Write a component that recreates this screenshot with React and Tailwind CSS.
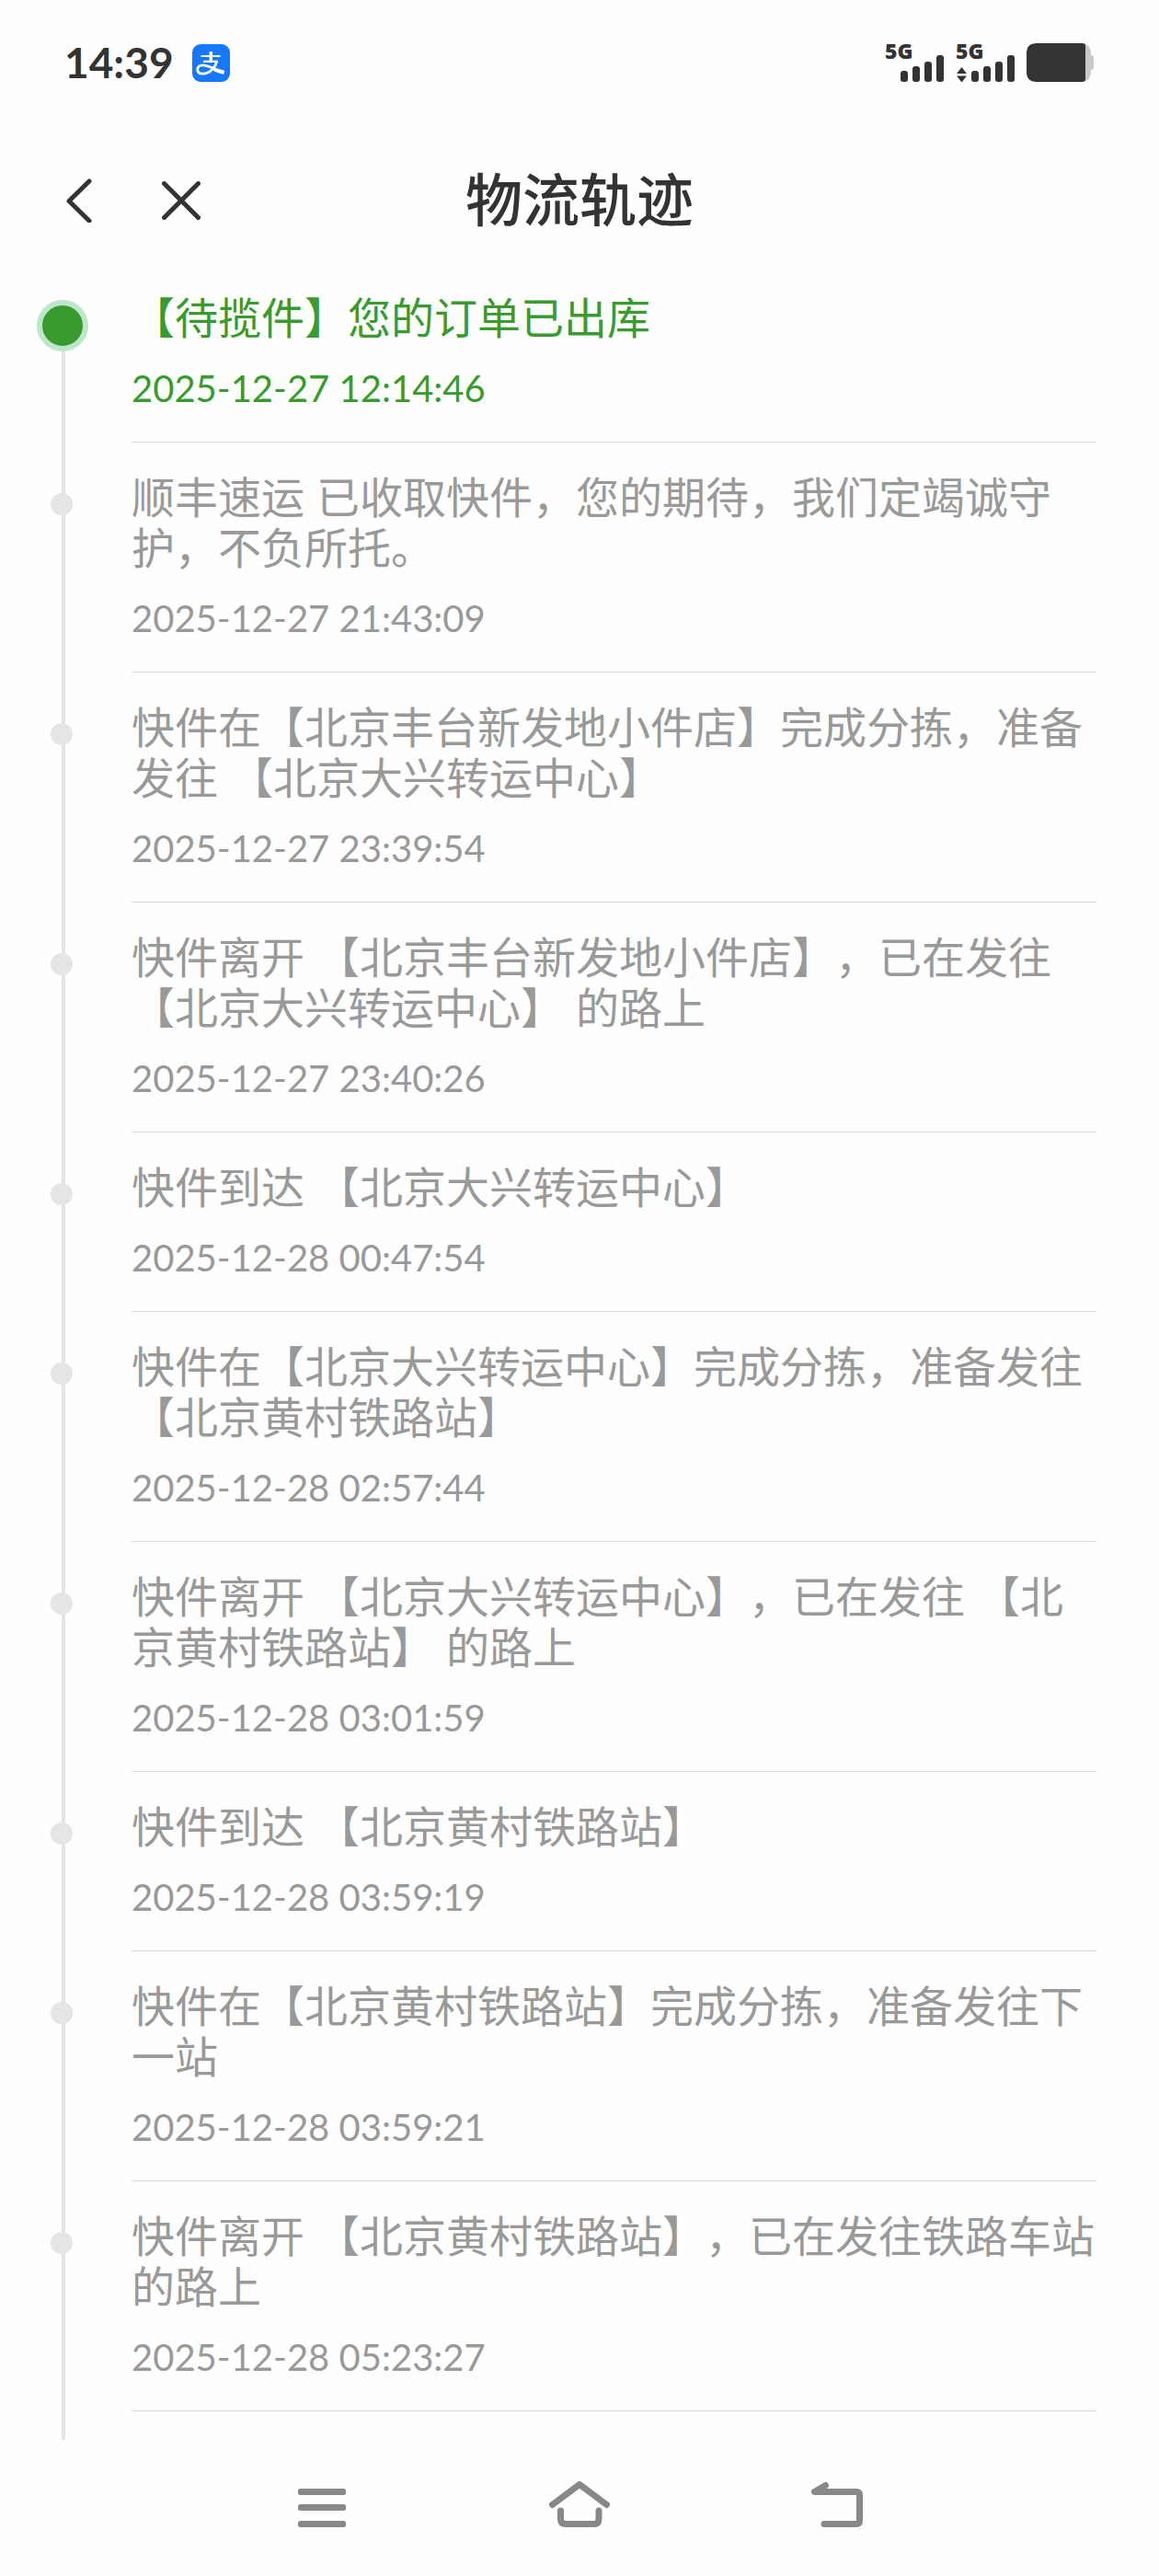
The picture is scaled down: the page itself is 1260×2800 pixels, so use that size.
import React from "react";

const events = [
  { text: "【待揽件】您的订单已出库", time: "2025-12-27 12:14:46", active: true },
  { text: "顺丰速运 已收取快件，您的期待，我们定竭诚守护，不负所托。", time: "2025-12-27 21:43:09" },
  { text: "快件在【北京丰台新发地小件店】完成分拣，准备发往 【北京大兴转运中心】", time: "2025-12-27 23:39:54" },
  { text: "快件离开 【北京丰台新发地小件店】，已在发往 【北京大兴转运中心】 的路上", time: "2025-12-27 23:40:26" },
  { text: "快件到达 【北京大兴转运中心】", time: "2025-12-28 00:47:54" },
  { text: "快件在【北京大兴转运中心】完成分拣，准备发往 【北京黄村铁路站】", time: "2025-12-28 02:57:44" },
  { text: "快件离开 【北京大兴转运中心】，已在发往 【北京黄村铁路站】 的路上", time: "2025-12-28 03:01:59" },
  { text: "快件到达 【北京黄村铁路站】", time: "2025-12-28 03:59:19" },
  { text: "快件在【北京黄村铁路站】完成分拣，准备发往下一站", time: "2025-12-28 03:59:21" },
  { text: "快件离开 【北京黄村铁路站】，已在发往铁路车站的路上", time: "2025-12-28 05:23:27" },
];

function Signal({ data }) {
  return (
    <div className="relative w-16 h-[42px]">
      <span className="absolute left-0 -top-1 text-[23px] leading-6 font-extrabold font-['Open_Sans',sans-serif]">5G</span>
      <svg className="w-16 h-[42px]" viewBox="0 0 64 42" fill="currentColor" aria-hidden="true">
        {data && <path d="M6.500 26 12 33H1zM1 35.500h11L6.500 42.500z" />}
        <rect x="17" y="30" width="8" height="12" rx="3" />
        <rect x="30" y="25" width="8" height="17" rx="3" />
        <rect x="43" y="20" width="8" height="22" rx="3" />
        <rect x="56" y="13" width="8" height="29" rx="3" />
      </svg>
    </div>
  );
}

function StatusBar() {
  return (
    <div className="flex items-center justify-between h-[136px] px-[70px]">
      <div className="flex items-center gap-5">
        <span className="text-[46px] leading-[56px] font-bold font-['Lato',sans-serif]">14:39</span>
        <svg className="w-[41px] h-[41px]" viewBox="0 0 41 41" role="img" aria-label="支付宝">
          <rect width="41" height="41" rx="9" fill="#1677ff" />
          <g fill="none" stroke="#fff">
            <path d="M9.500 13h21M12 18.800h16" strokeWidth="2.200" />
            <path d="M20.300 8v11" strokeWidth="3.400" />
            <path
              d="M26.800 18.800C25 25 19.500 32.200 11.500 32.200c-4 0-5.800-2-5.800-4.600 0-2.800 2.500-4.800 6-4.800 6 0 12 5 23 7.500"
              strokeWidth="2.800"
            />
            <path d="M24 27.500c3 1.300 6 2.300 10.500 3.300" strokeWidth="4" />
          </g>
        </svg>
      </div>
      <div className="flex items-center gap-[13px]">
        <Signal />
        <Signal data />
        <svg className="w-[74px] h-[42px]" viewBox="0 0 74 42" role="img" aria-label="电量">
          <path
            d="M60 0q10 1 10 11v2q3 0 3 3v10q0 3-3 3v2q0 10-10 11z"
            fill="#c9c9c9"
          />
          <path d="M11 0h50q3 0 3 3v36q0 3-3 3H11Q0 42 0 31V11Q0 0 11 0z" fill="#333" />
        </svg>
      </div>
    </div>
  );
}

function Header() {
  return (
    <header className="grid grid-cols-3 items-center h-[150px] pt-[14px] px-[70px]">
      <div className="flex items-center gap-[76px]">
        <button aria-label="返回">
          <svg className="w-[30px] h-[48px]" viewBox="0 0 30 48" fill="none" stroke="currentColor" strokeWidth="5" strokeLinecap="round" strokeLinejoin="round">
            <path d="M27 3 5 24.500 27 46" />
          </svg>
        </button>
        <button aria-label="关闭">
          <svg className="w-[42px] h-[42px]" viewBox="0 0 42 42" fill="none" stroke="currentColor" strokeWidth="5" strokeLinecap="round">
            <path d="m2.500 2.500 37 37M39.500 2.500l-37 37" />
          </svg>
        </button>
      </div>
      <h1 className="pt-1 text-[62px] leading-[72px] font-medium text-center whitespace-nowrap">物流轨迹</h1>
    </header>
  );
}

function TimelineItem({ event }) {
  return (
    <li className={event.active ? "relative text-[#379b2d]" : "relative text-[#999]"}>
      {event.active ? (
        <span className="absolute left-[40px] top-[40px] size-[56px] rounded-full bg-[#379b2d] border-6 border-[#bfe5cd]" />
      ) : (
        <span className="absolute left-[55px] top-[55px] size-6 rounded-full bg-[#e5e5e5]" />
      )}
      <div className="ml-[143px] mr-[68px] pt-[33px] pb-[33px] border-b border-[#d9d9d9]">
        <p className="text-[47px] leading-[55px]">{event.text}</p>
        <time className="block mt-6 pb-px text-[40px] leading-[48px] font-['Lato',sans-serif]">{event.time}</time>
      </div>
    </li>
  );
}

function NavBar() {
  return (
    <nav className="grid grid-cols-3 items-center justify-items-center h-[140px] px-[210px] text-[#888]">
      <button aria-label="菜单">
        <svg className="w-[66px] h-[50px]" viewBox="0 0 66 50" fill="currentColor">
          <rect x="7" y="8" width="52" height="7" rx="2.500" />
          <rect x="7" y="25" width="52" height="7" rx="2.500" />
          <rect x="7" y="43" width="52" height="7" rx="2.500" />
        </svg>
      </button>
      <button aria-label="主页">
        <svg className="w-[66px] h-[50px]" viewBox="0 0 66 50" fill="none" stroke="currentColor" strokeWidth="7" strokeLinecap="round" strokeLinejoin="round">
          <path d="M3.500 25.500 33 3.500l29.500 22" />
          <path d="M12.500 32v9q0 5.500 5.500 5.500h31q5 0 5-5.500v-9" strokeLinejoin="miter" />
        </svg>
      </button>
      <button aria-label="后退">
        <svg className="w-[66px] h-[50px]" viewBox="0 0 66 50" fill="none" stroke="currentColor" strokeWidth="7" strokeLinecap="round" strokeLinejoin="round">
          <path d="M20.500 4.500 8.500 11.500H54q3.500 0 3.500 3.500v28q0 3.500-3.500 3.500H19" />
        </svg>
      </button>
    </nav>
  );
}

export default function App() {
  return (
    <div className="min-h-screen bg-[#fefefe] text-[#333] overflow-hidden font-['Liberation_Sans','Noto_Sans_CJK_SC',sans-serif] [text-spacing-trim:space-all]">
      <StatusBar />
      <Header />
      <main className="relative pb-[31px]">
        {/* Rail behind the dots */}
        <div className="absolute left-[67px] top-[69px] bottom-0 w-1 bg-[#e5e5e5]" />
        <ol>
          {events.map((event) => (
            <TimelineItem key={event.time} event={event} />
          ))}
        </ol>
      </main>
      <NavBar />
    </div>
  );
}
